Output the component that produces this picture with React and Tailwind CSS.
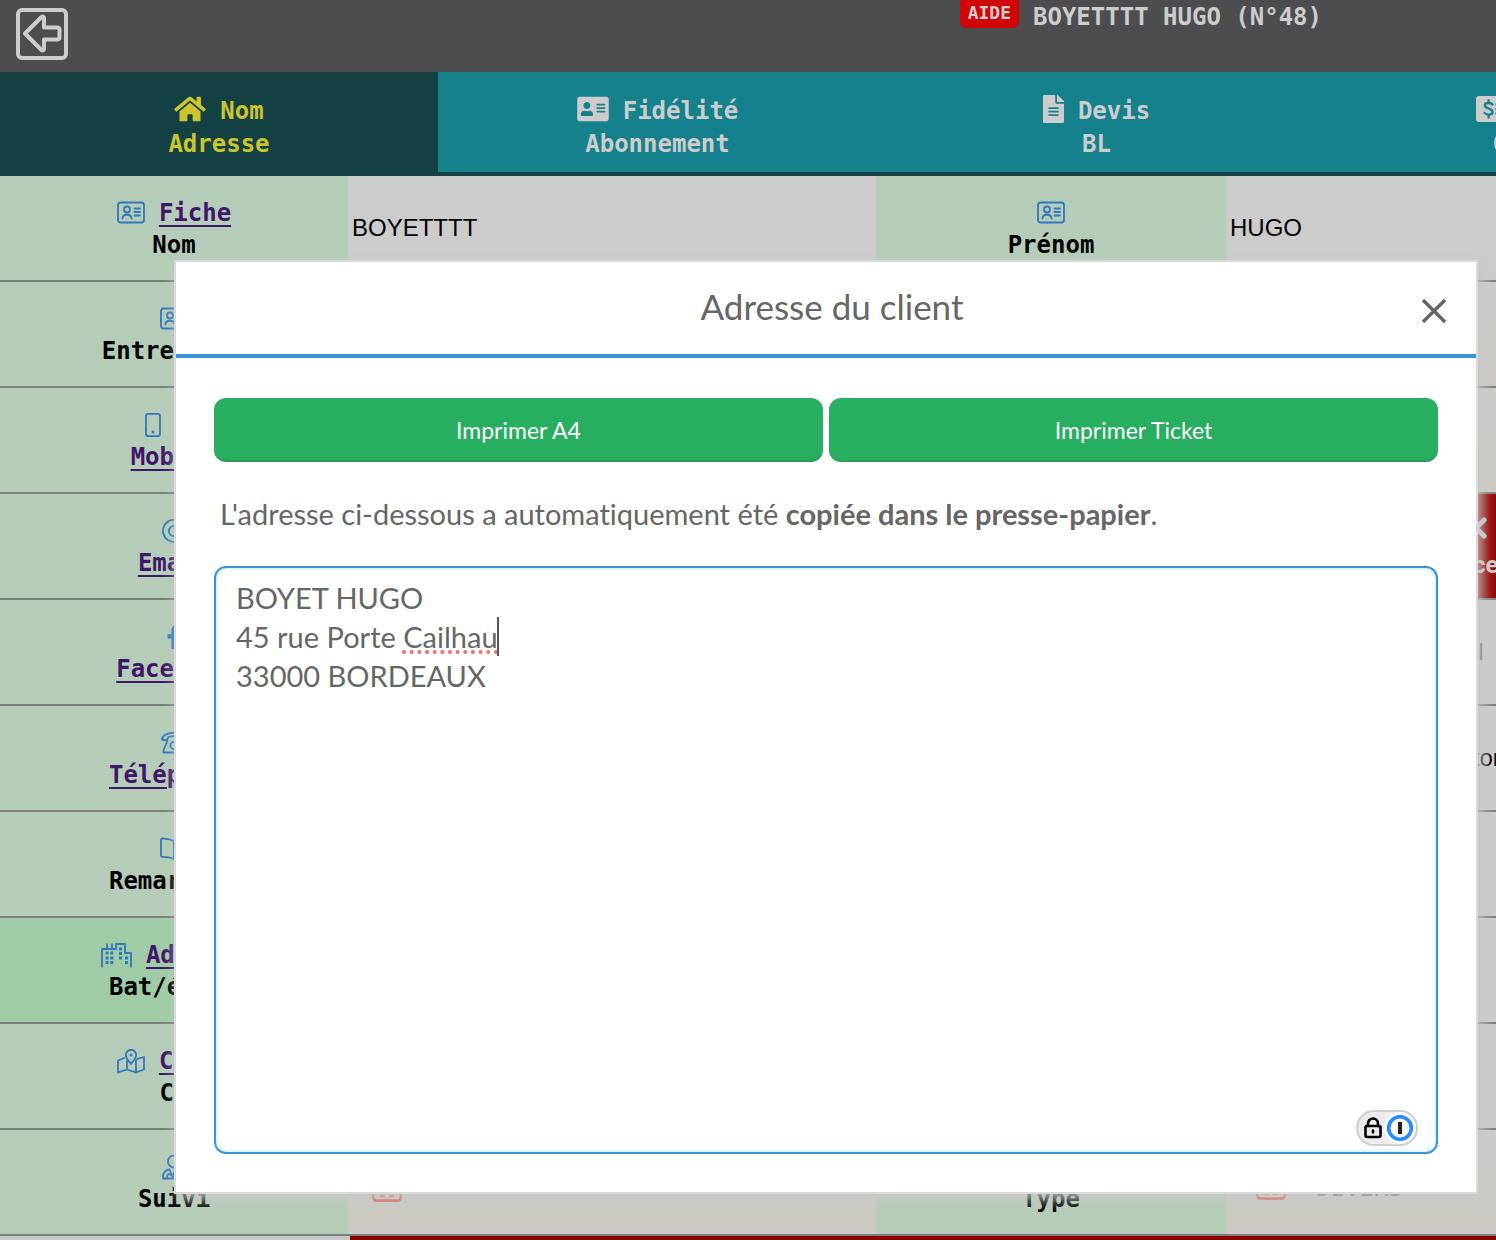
import { useState } from 'react';
import { FaHome, FaAddressCard, FaFileAlt, FaFacebookF } from 'react-icons/fa';

const stroke = { fill: 'none', stroke: 'currentColor', strokeWidth: 2, strokeLinecap: 'round', strokeLinejoin: 'round' };

function PaymentIcon({ className }) {
  return (
    <svg className={className} viewBox="0 0 32 28">
      <rect y="1" width="32" height="26" rx="3" fill="currentColor" />
      <g fill="none" stroke="#14818c" strokeWidth="2.4" strokeLinecap="round">
        <path d="M16.500 9.500c-1-1.600-7.500-2.800-7.700.8-.2 3.700 7.700 2.600 7.700 6.600 0 3.800-6.500 3-8 1M12.600 5.500v2M12.600 20v2.500" />
        <path d="M20.500 9.500h7M20.500 14h7M20.500 18.500h7" />
      </g>
    </svg>
  );
}

const TABS = [
  { icon: FaHome, size: 'h-7 w-8', top: 'Nom', bottom: 'Adresse', active: true },
  { icon: FaAddressCard, size: 'h-7 w-8', top: 'Fidélité', bottom: 'Abonnement' },
  { icon: FaFileAlt, size: 'h-7 w-[21px]', top: 'Devis', bottom: 'BL' },
  { icon: PaymentIcon, size: 'h-7 w-8', top: 'Solde', bottom: 'Compte' },
];

function CardIcon() {
  return (
    <svg width="28" height="24" viewBox="0 0 28 24" {...stroke} strokeWidth="1.800">
      <rect x="1" y="1.500" width="26" height="20" rx="2.500" />
      <circle cx="10" cy="8.500" r="3" />
      <path d="M5.500 17.500c0-5 9-5 9 0M17.500 7.500H23M17.500 11H23M17.500 14.500H23" />
    </svg>
  );
}

function PhoneIcon() {
  return (
    <svg width="16" height="24" viewBox="0 0 16 24" {...stroke} strokeWidth="1.800">
      <rect x="1" y="0.900" width="14" height="22.200" rx="2" />
      <circle cx="8" cy="19" r="1.500" fill="currentColor" stroke="none" />
    </svg>
  );
}

function AtIcon() {
  return (
    <svg width="24" height="24" viewBox="0 0 24 24" {...stroke} strokeWidth="1.800">
      <circle cx="12" cy="12" r="5.200" />
      <path d="M17.200 7v7c0 4 5.800 3.500 5.800-2A11 11 0 1 0 18 21" />
    </svg>
  );
}

function OldPhoneIcon() {
  return (
    <svg width="26" height="24" viewBox="0 0 26 24" {...stroke} strokeWidth="1.800">
      <path d="M1 8.500C1-.5 25-.5 25 8.500L20.500 9.500 18.500 6C15 5 11 5 7.500 6L5.500 9.500Z" />
      <path d="M6.500 10 2.500 19v2.500h21V19l-4-9" />
      <circle cx="13" cy="14.500" r="3.600" />
    </svg>
  );
}

function BookIcon() {
  return (
    <svg width="28" height="24" viewBox="0 0 28 24" {...stroke} strokeWidth="1.800">
      <path d="M14 4C10 2 6 1.500 2.500 1.500 1.600 1.500 1 2 1 3v15.500c0 1 .6 1.400 1.500 1.400 4 .1 8 .6 11.500 2 3.500-1.400 7.500-1.900 11.500-2 .9 0 1.500-.4 1.500-1.400V3c0-1-.6-1.500-1.500-1.500C22 1.500 18 2 14 4zM14 4v18" />
    </svg>
  );
}

function CityIcon() {
  return (
    <svg width="31" height="25" viewBox="0 0 31 25" {...stroke} strokeWidth="1.800" strokeLinecap="butt">
      <path d="M1 24.500V6h14V1h9v9h6v14.500M6 6V.500M11 6V.500" />
      <path d="M4.500 10h8M4.500 15h8M4.500 19.500h8M18 6h3.500M18 10.500h3.500M18 15h3.500M24 15h3.500M24 19.500h3.500" strokeWidth="3" strokeDasharray="3 1.800" />
    </svg>
  );
}

function MapIcon() {
  return (
    <svg width="28" height="25" viewBox="0 0 28 25" {...stroke} strokeWidth="1.800">
      <path d="M14 15c-2.500-3.500-5.200-6-5.200-9a5.200 5.200 0 0 1 10.400 0c0 3-2.700 5.500-5.200 9z" />
      <path d="M7 9 1 11.500v12l9-3 9 3 8-3V8l-7 2M10 11.500v9M19 11.500v12" />
      <circle cx="14" cy="6" r=".6" fill="currentColor" />
    </svg>
  );
}

function UserIcon() {
  return (
    <svg width="24" height="25" viewBox="0 0 24 25" {...stroke} strokeWidth="1.800">
      <circle cx="12" cy="6.500" r="6" />
      <path d="M7.500 14.500C3.500 15 1 18 1 21.500v2h22v-2c0-3.500-2.500-6.500-6.500-7M7.500 14.500l3.500 8.500 1-5.500 1 5.500 3.500-8.500M5 23c0-4 2-5 4-3" />
    </svg>
  );
}

function CalendarIcon() {
  return (
    <svg width="30" height="30" viewBox="0 0 30 30" {...stroke} strokeWidth="2.400">
      <rect x="1.200" y="4" width="27.600" height="24.500" rx="3" />
      <path d="M1 11h28M9 1v6M21 1v6M9 18h3M18 18h3M9 24h3M18 24h3" />
    </svg>
  );
}

const ROWS = [
  { icon: CardIcon, link: 'Fiche', text: 'Nom', value: 'BOYETTTT', right: { icon: CardIcon, text: 'Prénom', value: 'HUGO' } },
  { icon: CardIcon, text: 'Entreprise', tint: true },
  { icon: PhoneIcon, link: 'N°', text: 'Mobile', linked: true, tint: true },
  { icon: AtIcon, text: 'Email', linked: true, refused: true },
  { icon: FaFacebookF, text: 'Facebook', linked: true, right: { placeholder: 'Compte ou lien du profil' } },
  { icon: OldPhoneIcon, text: 'Téléphone', linked: true, right: { value: 'Démarchages : non autorisé' } },
  { icon: BookIcon, text: 'Remarques' },
  { icon: CityIcon, link: 'Adresse', text: 'Bat/étage', highlight: true },
  { icon: MapIcon, link: 'Carte', text: 'CP' },
  { icon: UserIcon, text: 'Suivi', tint: true, follow: true, right: { icon: CardIcon, text: 'Type' } },
];

function Label({ icon: Icon, link, text, linked }) {
  return (
    <div className="flex flex-col items-center pt-[2px] font-bold leading-8">
      <div className="flex h-8 items-center gap-[14px]">
        {Icon && <span className="text-[#2f78bd]"><Icon /></span>}
        {link && <a href="#fiche" className="text-[#3f1769] underline decoration-2 underline-offset-4">{link}</a>}
      </div>
      {linked
        ? <a href="#fiche" className="text-[#3f1769] underline decoration-2 underline-offset-4">{text}</a>
        : <span>{text}</span>}
    </div>
  );
}

function Field({ label, value, placeholder }) {
  return (
    <input aria-label={label} defaultValue={value} placeholder={placeholder}
      className="block h-[104px] w-full bg-transparent px-1 font-['Liberation_Sans',sans-serif] text-2xl text-black outline-none placeholder:text-[#606060]" />
  );
}

const CELL = 'border-b-2 border-[#7d7f7e] p-0';

function Row({ row }) {
  const right = row.right || {};
  const fill = row.tint ? 'bg-linear-to-b from-[#cacaca] to-[#ccc9c1]' : 'bg-[#cccccc]';
  return (
    <tr className="h-[106px]">
      <th className={`${CELL} ${row.highlight ? 'bg-[#9fcca7]' : 'bg-[#b5ccb8]'}`}>
        <Label {...row} />
      </th>
      <td className={`${CELL} ${fill}`}>
        {row.follow
          ? <div className="flex h-[104px] items-start px-6 pt-[42px] text-[#d9503c]"><CalendarIcon /></div>
          : <Field label={row.text} value={row.value} />}
      </td>
      <th className={`${CELL} bg-[#b5ccb8]`}>
        {right.text && <Label icon={right.icon} text={right.text} />}
      </th>
      <td className={`${CELL} ${row.refused ? 'bg-[#950302]' : fill}`}>
        {row.refused && (
          <div className="flex flex-col items-center pt-2 pr-4 font-['Roboto',sans-serif] font-bold leading-9 text-[#d0cccc]">
            <svg width="22" height="22" viewBox="0 0 22 22" {...stroke} strokeWidth="5" className="mr-3 mb-2">
              <path d="M3 3l16 16M19 3 3 19" />
            </svg>
            <span>Concerné</span>
          </div>
        )}
        {row.follow && (
          <div className="flex h-[104px] items-start gap-[30px] px-[30px] pt-10 leading-9 text-[#555555]">
            <span className="text-[#d9503c]"><CalendarIcon /></span>
            <span>DIVERS</span>
          </div>
        )}
        {!row.refused && !row.follow && (
          <Field label={right.text || `${row.text} (suite)`} value={right.value} placeholder={right.placeholder} />
        )}
      </td>
    </tr>
  );
}

function AddressDialog() {
  const [address, setAddress] = useState('BOYET HUGO\n45 rue Porte Cailhau\n33000 BORDEAUX');

  return (
    <div className="absolute inset-0 pt-[260px] pr-[18px] pl-[174px] font-['Lato',sans-serif] text-[#666666] [font-variant-ligatures:none]">
      <div role="dialog" aria-labelledby="dialog-title"
        className="border-2 border-[#d9d9d9] bg-white shadow-[4px_5px_14px_#c8c8c8]">
        <div className="flex h-24 items-center border-b-4 border-[#3a95d8] pr-[30px] pl-[66px]">
          <h2 id="dialog-title" className="flex-1 pb-1 text-center text-[35px]">Adresse du client</h2>
          <button type="button" aria-label="Fermer" className="mt-[6px]">
            <svg width="24" height="24" viewBox="0 0 24 24" {...stroke} strokeWidth="3.400" strokeLinecap="butt">
              <path d="M1 1l22 22M23 1 1 23" />
            </svg>
          </button>
        </div>

        <div className="px-[38px] pt-10 pb-[38px]">
          <div className="grid grid-cols-2 gap-[6px] text-[23px] text-white">
            <button type="button" className="h-16 rounded-xl border-b-2 border-[#2a9e58] bg-[#27ae60] pt-[2px]">Imprimer A4</button>
            <button type="button" className="h-16 rounded-xl border-b-2 border-[#2a9e58] bg-[#27ae60] pt-[2px]">Imprimer Ticket</button>
          </div>

          <p className="px-[6px] py-8 text-[29px] leading-10">
            L'adresse ci-dessous a automatiquement été <strong>copiée dans le presse-papier</strong>.
          </p>

          <div className="relative">
            <textarea aria-label="Adresse" spellCheck={false} value={address} onChange={(e) => setAddress(e.target.value)}
              className="block h-[588px] w-full resize-none rounded-xl border-2 border-[#3a95d8] px-5 py-[10px] text-[29px] leading-[39px] shadow-[inset_0_0_4px_#b5dcf7] outline-none" />
            {/* spelling mark and caret on the second line */}
            <div className="absolute top-[84px] left-[188px] w-24 border-b-4 border-dotted border-[#ee7168]" />
            <div className="absolute top-[51px] left-[283px] h-[39px] w-[2px] bg-[#555555]" />
            {/* password manager badge */}
            <div className="absolute right-5 bottom-2 flex h-9 w-[62px] items-center justify-between rounded-full border-2 border-[#cfcfcf] bg-[#ececec] pl-[6px]">
              <svg width="18" height="22" viewBox="0 0 18 22" {...stroke} stroke="#000000" strokeWidth="2.600">
                <rect x="1.500" y="9" width="15" height="11" rx="1.500" />
                <path d="M4 9V6.500a5 5 0 0 1 10 0V9M9 13.500v2" />
              </svg>
              <svg width="32" height="32" viewBox="0 0 32 32">
                <circle cx="16" cy="16" r="16" fill="#ffffff" />
                <circle cx="16" cy="16" r="11.300" fill="none" stroke="#268bff" strokeWidth="3.600" />
                <rect x="14" y="10" width="4" height="12" fill="#222222" />
              </svg>
            </div>
          </div>
        </div>
      </div>
    </div>
  );
}

export default function App() {
  return (
    <div className="relative h-screen overflow-hidden bg-[#c8c8c8] font-['DejaVu_Sans_Mono',monospace] text-2xl text-black">
      <header className="flex h-[72px] items-start justify-between bg-[#4d4d4f] pr-[174px] pl-4 font-bold text-[#cccccc]">
        <button type="button" aria-label="Retour" className="pt-2">
          <svg width="52" height="52" viewBox="0 0 52 52" {...stroke} strokeWidth="4">
            <rect x="2" y="2" width="48" height="48" rx="4" />
            <path d="M9 25.500 25.500 9c1-.8 2.500-.4 2.500 1v9.500h13c1.500 0 2.500.7 2.500 2v8c0 1.500-1 2-2.500 2H28V41c0 1.500-1.500 2-2.500 1z" />
          </svg>
        </button>
        <div className="flex items-start gap-[14px]">
          <button type="button" className="h-7 rounded-b-md bg-[#d10505] px-2 pb-[2px] text-lg leading-6">AIDE</button>
          <span className="leading-[34px]">BOYETTTT HUGO (N°48)</span>
        </div>
      </header>

      <nav className="flex h-[104px] border-b-4 border-[#134144] bg-[#14818c] font-bold">
        {TABS.map(({ icon: Icon, size, top, bottom, active }) => (
          <button key={top} type="button"
            className={active
              ? 'flex h-[104px] w-[438px] shrink-0 flex-col items-center bg-[#134144] pt-[23px] leading-[33px] text-[#cdc42e]'
              : 'flex h-[100px] w-[439px] shrink-0 flex-col items-center pt-[23px] leading-[33px] text-[#cccccc]'}>
            <span className="flex h-[33px] items-center gap-[14px]">
              <span className="mb-[6px]"><Icon className={size} /></span>
              {top}
            </span>
            <span>{bottom}</span>
          </button>
        ))}
      </nav>

      <table className="w-[1754px] table-fixed border-separate border-spacing-0">
        <colgroup>
          <col className="w-[348px]" />
          <col className="w-[528px]" />
          <col className="w-[350px]" />
          <col className="w-[528px]" />
        </colgroup>
        <tbody>
          {ROWS.map((row) => <Row key={row.text} row={row} />)}
          <tr className="h-[106px]">
            <th className="bg-[#c8c8c8]" />
            <td colSpan={3} className="border-l-2 border-[#c8c8c8] bg-[#8b0000]" />
          </tr>
        </tbody>
      </table>

      <AddressDialog />
    </div>
  );
}
